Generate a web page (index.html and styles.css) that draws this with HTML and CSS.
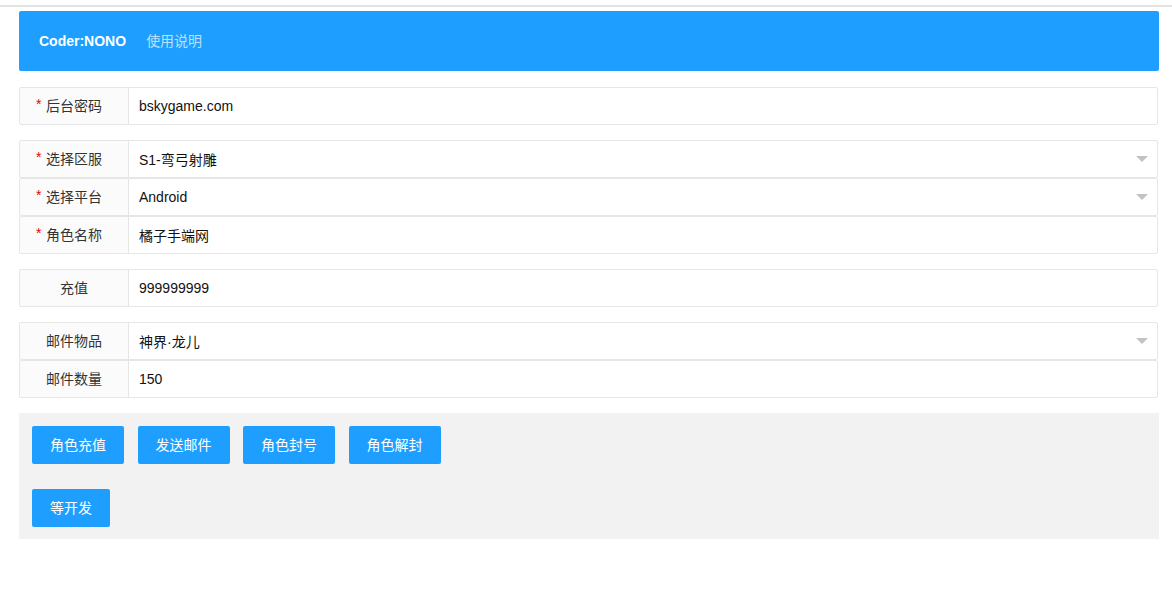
FILE: index.html
```html
<!DOCTYPE html>
<html lang="zh-CN">
<head>
    <meta charset="UTF-8">
    <meta name="viewport" content="width=device-width, initial-scale=1.0">
    <title>GM后台</title>
    <link rel="stylesheet" href="styles.css">
</head>
<body>
    <div class="top-line"></div>
    <div class="container">
        <ul class="nav">
            <li class="nav-item nav-this">Coder:NONO</li>
            <li class="nav-item">使用说明</li>
        </ul>

        <form class="form-pane" onsubmit="return false">
            <div class="form-group">
                <div class="form-item">
                    <label class="form-label"><span class="req">后台密码</span></label>
                    <div class="input-block">
                        <input type="text" class="input" value="bskygame.com">
                    </div>
                </div>
            </div>

            <div class="form-group">
                <div class="form-item">
                    <label class="form-label"><span class="req">选择区服</span></label>
                    <div class="input-block select">
                        <input type="text" class="input" value="S1-弯弓射雕" readonly>
                        <i class="edge"></i>
                    </div>
                </div>
                <div class="form-item">
                    <label class="form-label"><span class="req">选择平台</span></label>
                    <div class="input-block select">
                        <input type="text" class="input" value="Android" readonly>
                        <i class="edge"></i>
                    </div>
                </div>
                <div class="form-item">
                    <label class="form-label"><span class="req">角色名称</span></label>
                    <div class="input-block">
                        <input type="text" class="input" value="橘子手端网">
                    </div>
                </div>
            </div>

            <div class="form-group">
                <div class="form-item">
                    <label class="form-label">充值</label>
                    <div class="input-block">
                        <input type="text" class="input" value="999999999">
                    </div>
                </div>
            </div>

            <div class="form-group">
                <div class="form-item">
                    <label class="form-label">邮件物品</label>
                    <div class="input-block select">
                        <input type="text" class="input" value="神界·龙儿" readonly>
                        <i class="edge"></i>
                    </div>
                </div>
                <div class="form-item">
                    <label class="form-label">邮件数量</label>
                    <div class="input-block">
                        <input type="text" class="input" value="150">
                    </div>
                </div>
            </div>

            <div class="btn-panel">
                <div class="btn-row">
                    <button class="btn">角色充值</button>
                    <button class="btn">发送邮件</button>
                    <button class="btn">角色封号</button>
                    <button class="btn">角色解封</button>
                </div>
                <div class="btn-row">
                    <button class="btn">等开发</button>
                </div>
            </div>
        </form>
    </div>
</body>
</html>
```

FILE: styles.css
```css
body {
    margin: 0;
    font-family: "Liberation Sans", "Noto Sans CJK SC", sans-serif;
    font-size: 14px;
    color: #333;
    background: #fff;
}
.top-line {
    height: 5px;
    border-bottom: 2px solid #e2e2e2;
}
.container {
    width: 1140px;
    margin: 4px 0 0 19px;
}
.nav {
    display: flex;
    list-style: none;
    margin: 0 0 16px;
    padding: 0 10px;
    height: 60px;
    background: #1e9fff;
    border-radius: 2px;
}
.nav-item {
    padding: 0 10px;
    line-height: 60px;
    color: rgba(255, 255, 255, 0.7);
}
.nav-item.nav-this {
    color: #fff;
    font-weight: bold;
}
.form-group {
    margin-bottom: 15px;
}
.form-item {
    display: flex;
    height: 38px;
}
.form-label {
    box-sizing: border-box;
    width: 110px;
    height: 38px;
    padding: 8px 15px;
    line-height: 20px;
    text-align: center;
    background: #fbfbfb;
    border: 1px solid #e6e6e6;
    border-radius: 2px 0 0 2px;
    color: #333;
}
.req {
    position: relative;
}
.req::before {
    content: "*";
    position: absolute;
    left: -10px;
    top: -4px;
    color: #e60000;
}
.input-block {
    position: relative;
    flex: 1;
    margin-left: -1px;
    margin-right: 1px;
}
.input {
    box-sizing: border-box;
    display: block;
    width: 100%;
    height: 38px;
    padding: 0 10px;
    border: 1px solid #e6e6e6;
    border-radius: 0 2px 2px 0;
    background: #fff;
    font-family: inherit;
    font-size: 14px;
    color: #111;
    outline: none;
}
.select .input {
    padding-right: 30px;
    cursor: pointer;
}
.edge {
    position: absolute;
    right: 10px;
    top: 50%;
    margin-top: -3px;
    width: 0;
    height: 0;
    border-width: 6px 6px 0;
    border-style: solid;
    border-color: #c2c2c2 transparent transparent;
}
.btn-panel {
    display: flex;
    flex-direction: column;
    gap: 25px;
    padding: 13px 13px 12px;
    background: #f2f2f2;
}
.btn-row {
    display: flex;
    gap: 13.5px;
}
.btn {
    height: 38px;
    line-height: 38px;
    padding: 0 18px;
    border: none;
    border-radius: 2px;
    background: #1e9fff;
    color: #fff;
    font-family: inherit;
    font-size: 14px;
    cursor: pointer;
}
.btn:hover {
    opacity: 0.8;
}
```
